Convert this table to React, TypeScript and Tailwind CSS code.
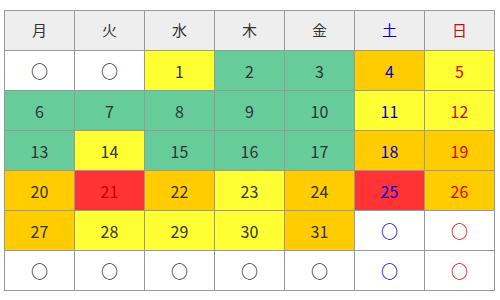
const HEAD = ['月', '火', '水', '木', '金', '土', '日'];

type Cell = { t: string; bg: string; c?: string };

const W = 'bg-white';
const G = 'bg-[#66cc99]';
const Y = 'bg-[#ffff33]';
const O = 'bg-[#ffcc00]';
const R = 'bg-[#ff3333]';

const E = '○';

const rows: Cell[][] = [
  [{ t: E, bg: W }, { t: E, bg: W }, { t: '1', bg: Y }, { t: '2', bg: G }, { t: '3', bg: G }, { t: '4', bg: O }, { t: '5', bg: Y }],
  [{ t: '6', bg: G }, { t: '7', bg: G }, { t: '8', bg: G }, { t: '9', bg: G }, { t: '10', bg: G }, { t: '11', bg: Y }, { t: '12', bg: Y }],
  [{ t: '13', bg: G }, { t: '14', bg: Y }, { t: '15', bg: G }, { t: '16', bg: G }, { t: '17', bg: G }, { t: '18', bg: O }, { t: '19', bg: O }],
  [{ t: '20', bg: O }, { t: '21', bg: R, c: 'text-[#c00000]' }, { t: '22', bg: O }, { t: '23', bg: Y }, { t: '24', bg: O }, { t: '25', bg: R }, { t: '26', bg: O }],
  [{ t: '27', bg: O }, { t: '28', bg: Y }, { t: '29', bg: Y }, { t: '30', bg: Y }, { t: '31', bg: O }, { t: E, bg: W }, { t: E, bg: W }],
  [{ t: E, bg: W }, { t: E, bg: W }, { t: E, bg: W }, { t: E, bg: W }, { t: E, bg: W }, { t: E, bg: W }, { t: E, bg: W }],
];

// column colour: Sat blue, Sun red, weekdays dark gray
function colColor(i: number) {
  if (i === 5) return 'text-[#0000dd]';
  if (i === 6) return 'text-[#e00000]';
  return 'text-[#333333]';
}

export default function App() {
  return (
    <div className="w-[500px] h-[300px] bg-white pt-[10px] pl-[4px] font-['Noto_Sans_CJK_JP',sans-serif]">
      <div className="grid grid-cols-[repeat(7,70px)] w-[491px] border-l border-t border-[#999999]">
        {HEAD.map((h, i) => (
          <div
            key={h}
            className={`h-[40px] flex items-center justify-center bg-[#eeeeee] border-r border-b border-[#999999] text-[15px] ${colColor(i)}`}
          >
            {h}
          </div>
        ))}
        {rows.map((row, r) =>
          row.map((cell, i) => (
            <div
              key={`${r}-${i}`}
              className={`h-[40px] flex items-center justify-center border-r border-b border-[#999999] ${
                cell.t === E ? 'text-[17px] font-bold' : 'text-[16px]'
              } ${cell.bg} ${cell.c ?? colColor(i)}`}
            >
              {cell.t}
            </div>
          ))
        )}
      </div>
    </div>
  );
}
